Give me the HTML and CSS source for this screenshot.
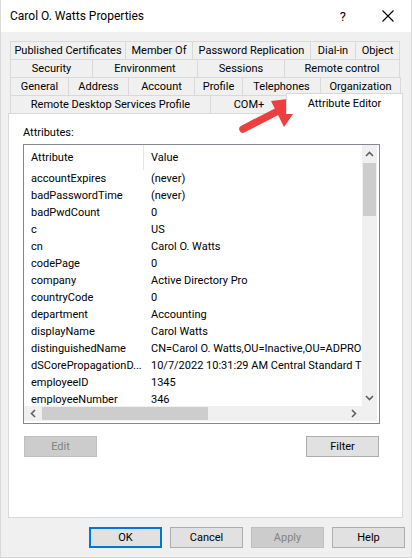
FILE: index.html
```html
<!DOCTYPE html>
<html>
<head>
<meta charset="utf-8">
<link rel="stylesheet" href="styles.css">
</head>
<body>
<div class="window">
  <div class="titlebar">
    <span class="title">Carol O. Watts Properties</span>
    <span class="help">?</span>
    <svg class="close" width="12" height="12" viewBox="0 0 12 12"><path d="M0.5 0.5 L11.5 11.5 M11.5 0.5 L0.5 11.5" stroke="#000" stroke-width="1.1" fill="none"/></svg>
  </div>
  <div class="content">
    <div class="tabs">
      <div class="row r1">
        <div class="tab">Published Certificates</div>
        <div class="tab">Member Of</div>
        <div class="tab">Password Replication</div>
        <div class="tab">Dial-in</div>
        <div class="tab">Object</div>
      </div>
      <div class="row r2">
        <div class="tab">Security</div>
        <div class="tab">Environment</div>
        <div class="tab">Sessions</div>
        <div class="tab">Remote control</div>
      </div>
      <div class="row r3">
        <div class="tab">General</div>
        <div class="tab">Address</div>
        <div class="tab">Account</div>
        <div class="tab">Profile</div>
        <div class="tab">Telephones</div>
        <div class="tab">Organization</div>
      </div>
      <div class="row r4">
        <div class="tab">Remote Desktop Services Profile</div>
        <div class="tab">COM+</div>
        <div class="tab selected">Attribute Editor</div>
      </div>
    </div>
    <div class="panel">
      <div class="label">Attributes:</div>
      <div class="list">
        <div class="list-body">
          <div class="lrow head"><span class="c1">Attribute</span><span class="c2">Value</span></div>
          <div class="lrow"><span class="c1">accountExpires</span><span class="c2">(never)</span></div>
          <div class="lrow"><span class="c1">badPasswordTime</span><span class="c2">(never)</span></div>
          <div class="lrow"><span class="c1">badPwdCount</span><span class="c2">0</span></div>
          <div class="lrow"><span class="c1">c</span><span class="c2">US</span></div>
          <div class="lrow"><span class="c1">cn</span><span class="c2">Carol O. Watts</span></div>
          <div class="lrow"><span class="c1">codePage</span><span class="c2">0</span></div>
          <div class="lrow"><span class="c1">company</span><span class="c2">Active Directory Pro</span></div>
          <div class="lrow"><span class="c1">countryCode</span><span class="c2">0</span></div>
          <div class="lrow"><span class="c1">department</span><span class="c2">Accounting</span></div>
          <div class="lrow"><span class="c1">displayName</span><span class="c2">Carol Watts</span></div>
          <div class="lrow"><span class="c1">distinguishedName</span><span class="c2">CN=Carol O. Watts,OU=Inactive,OU=ADPRO Users,DC=ad,DC=activedirectorypro,DC=com</span></div>
          <div class="lrow"><span class="c1">dSCorePropagationD...</span><span class="c2">10/7/2022 10:31:29 AM Central Standard Time</span></div>
          <div class="lrow"><span class="c1">employeeID</span><span class="c2">1345</span></div>
          <div class="lrow"><span class="c1">employeeNumber</span><span class="c2">346</span></div>
        </div>
        <div class="vscroll">
          <div class="arrow"><svg width="9" height="6" viewBox="0 0 9 6"><polyline points="1,5 4.5,1.5 8,5" fill="none" stroke="#606060" stroke-width="1.6"/></svg></div>
          <div class="vthumb"></div>
          <div class="track"></div>
          <div class="arrow"><svg width="9" height="6" viewBox="0 0 9 6"><polyline points="1,1 4.5,4.5 8,1" fill="none" stroke="#606060" stroke-width="1.6"/></svg></div>
        </div>
        <div class="hscroll">
          <div class="arrow"><svg width="6" height="9" viewBox="0 0 6 9"><polyline points="5,1 1.5,4.5 5,8" fill="none" stroke="#606060" stroke-width="1.6"/></svg></div>
          <div class="hthumb"></div>
          <div class="track"></div>
          <div class="arrow"><svg width="6" height="9" viewBox="0 0 6 9"><polyline points="1,1 4.5,4.5 1,8" fill="none" stroke="#606060" stroke-width="1.6"/></svg></div>
        </div>
        <div class="corner"></div>
      </div>
      <div class="panel-buttons">
        <div class="btn disabled">Edit</div>
        <div class="btn">Filter</div>
      </div>
    </div>
  </div>
  <div class="footer">
    <div class="btn default">OK</div>
    <div class="btn">Cancel</div>
    <div class="btn disabled">Apply</div>
    <div class="btn">Help</div>
  </div>
  <svg class="pointer" width="80" height="50" viewBox="0 0 80 50">
    <line x1="7" y1="39" x2="44" y2="20" stroke="#ef3e3e" stroke-width="7.5" stroke-linecap="round"/>
    <polygon points="35,11 69,7 48,37" fill="#ef3e3e"/>
  </svg>
</div>
</body>
</html>
```
FILE: styles.css
```css
* { box-sizing: border-box; }
body {
  margin: 0;
  font-family: Roboto, "Liberation Sans", sans-serif;
  font-size: 11px;
  color: #000;
}
.window {
  position: relative;
  width: 412px;
  height: 558px;
  background: #f0f0f0;
  border-left: 1px solid #dadada;
  border-right: 1px solid #dadada;
  border-bottom: 1px solid #d6d6d6;
  display: flex;
  flex-direction: column;
}
.titlebar {
  height: 32px;
  background: #fff;
  display: flex;
  align-items: center;
  padding-left: 9px;
  flex: none;
}
.title { font-size: 12px; }
.help {
  margin-left: auto;
  font-size: 13px;
  margin-right: 36px;
}
.close { margin-right: 17px; }
.content {
  flex: 1;
  display: flex;
  flex-direction: column;
  padding: 9px 8px 0 7px;
}
.tabs { margin: 0 2px; flex: none; }
.row { display: grid; height: 18px; }
.r1 { grid-template-columns: 116px 67px 118px 45px 44px; }
.r2 { grid-template-columns: 83px 105px 87px 115px; }
.r3 { grid-template-columns: 59px 60px 66px 48px 78px 80px; }
.r4 { grid-template-columns: 201px 77px 113px; }
.tab {
  border-top: 1px solid #d9d9d9;
  border-right: 1px solid #d9d9d9;
  display: flex;
  align-items: center;
  justify-content: center;
  white-space: nowrap;
  background: #f0f0f0;
}
.tab:first-child { border-left: 1px solid #d9d9d9; }
.tab.selected {
  background: #fff;
  border: 1px solid #d9d9d9;
  border-bottom: none;
  margin: -2px -2px -1px -2px;
  position: relative;
  z-index: 1;
  padding-bottom: 2px;
}
.panel {
  flex: 1;
  background: #fff;
  border: 1px solid #d9d9d9;
  padding: 11px 22px 0 14px;
  display: flex;
  flex-direction: column;
}
.label { line-height: 15px; height: 15px; margin-bottom: 4px; }
.list {
  height: 280px;
  border: 1px solid #828790;
  padding: 0 2px 2px 0;
  display: grid;
  grid-template-columns: 1fr 15px;
  grid-template-rows: 1fr 15px;
}
.list-body { overflow: hidden; min-width: 0; }
.lrow {
  display: grid;
  grid-template-columns: 120px 1fr;
  height: 17px;
  align-items: center;
  white-space: nowrap;
}
.lrow span { overflow: hidden; padding-left: 7px; }
.lrow.head { height: 25px; align-items: stretch; }
.lrow.head span { display: flex; align-items: center; }
.lrow.head .c1 { border-right: 1px solid #e5e5e5; }
.vscroll, .hscroll { background: #f0f0f0; display: flex; }
.vscroll { flex-direction: column; }
.arrow {
  flex: none;
  width: 17px;
  height: 17px;
  display: flex;
  align-items: center;
  justify-content: center;
}
.vscroll .arrow { width: 15px; }
.hscroll .arrow { height: 15px; }
.vthumb { height: 53px; background: #cdcdcd; margin: 1px 1px 0 1px; flex: none; }
.hthumb { width: 166px; background: #cdcdcd; margin: 1px 0 1px 1px; flex: none; }
.track { flex: 1; }
.corner { background: #f0f0f0; }
.panel-buttons {
  margin-top: 12px;
  display: flex;
  justify-content: space-between;
  padding: 0 1px;
}
.btn {
  width: 73px;
  height: 21px;
  background: #e1e1e1;
  border: 1px solid #adadad;
  display: flex;
  align-items: center;
  justify-content: center;
}
.btn.disabled {
  background: #cccccc;
  border-color: #bfbfbf;
  color: #838383;
}
.btn.default { border: 2px solid #0078d7; }
.footer {
  flex: none;
  height: 39px;
  display: flex;
  justify-content: flex-end;
  gap: 8px;
  padding: 9px 6px 0 0;
}
.pointer {
  position: absolute;
  left: 235px;
  top: 90px;
}
```
